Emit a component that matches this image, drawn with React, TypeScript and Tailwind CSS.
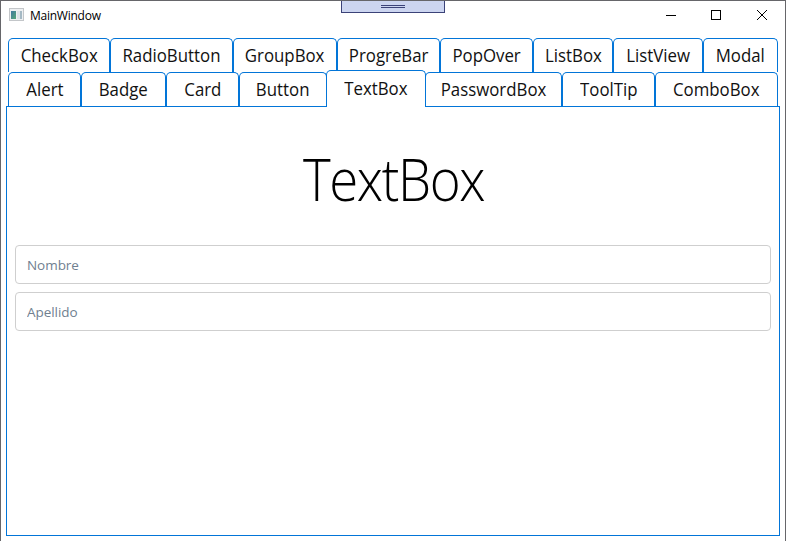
type Tab = { label: string; box: string; selected?: boolean };

const firstRow: Tab[] = [
  { label: "CheckBox", box: "w-[102px]" },
  { label: "RadioButton", box: "w-[123px]" },
  { label: "GroupBox", box: "w-[104px]" },
  { label: "ProgreBar", box: "w-[103px]" },
  { label: "PopOver", box: "w-[93px]" },
  { label: "ListBox", box: "w-[80px]" },
  { label: "ListView", box: "w-[90px]" },
  { label: "Modal", box: "w-[75px]" },
];

const secondRow: Tab[] = [
  { label: "Alert", box: "w-[73px]" },
  { label: "Badge", box: "w-[85px]" },
  { label: "Card", box: "w-[73px]" },
  { label: "Button", box: "w-[88px]" },
  { label: "TextBox", box: "w-[100px]", selected: true },
  { label: "PasswordBox", box: "w-[137px]" },
  { label: "ToolTip", box: "w-[93px]" },
  { label: "ComboBox", box: "w-[123px]" },
];

function TabRow({ tabs }: { tabs: Tab[] }) {
  return (
    <div className="flex h-[34px] items-end pl-[7px]">
      {tabs.map((t) => (
        <button
          key={t.label}
          className={`${t.box} flex shrink-0 justify-center rounded-t-[5px] border border-b-0 border-[#0275d8] bg-white text-[18px] leading-[33px] whitespace-nowrap text-[#111] ${
            t.selected ? "z-10 -mr-px -mb-px -ml-px h-[37px] pt-px" : "h-[34px]"
          }`}
        >
          <span className="inline-block scale-x-[0.935]">{t.label}</span>
        </button>
      ))}
    </div>
  );
}

function Field({ placeholder }: { placeholder: string }) {
  return (
    <input
      placeholder={placeholder}
      className="h-[39px] w-full rounded-[4px] border border-[#cfcfcf] px-[11px] text-[13.5px] tracking-[-0.05px] text-black outline-none placeholder:text-[#708090]"
    />
  );
}

export default function App() {
  return (
    <div className="relative flex h-[541px] w-[786px] flex-col overflow-hidden border border-b-0 border-[#66666a] bg-white font-['Open_Sans','Noto_Sans',sans-serif]">
      <div className="absolute -top-px left-[340px] flex h-[13px] w-[104px] flex-col items-center gap-px border border-[#3b4278] bg-[#ccd5f0] pt-1">
        <div className="h-px w-6 bg-[#3b4278]" />
        <div className="h-px w-6 bg-[#3b4278]" />
      </div>
      <header className="flex h-[37px] shrink-0 items-start">
        <svg className="mt-[7px] ml-2" width="16" height="14" viewBox="0 0 16 14" shapeRendering="crispEdges">
          <defs>
            <linearGradient id="pane" x1="0" y1="0" x2="1" y2="1">
              <stop offset="0" stopColor="#4179a0" />
              <stop offset="1" stopColor="#56a878" />
            </linearGradient>
          </defs>
          <path fill="#c3c6c9" d="M0 0h15v13H0z" />
          <path fill="#eef0f2" d="M1 1h13v11H1z" />
          <path fill="url(#pane)" d="M2 3h5v8H2z" />
          <path fill="#dde3e8" d="M8 3h3v8H8z" />
          <path fill="#a5b9c4" d="M11 3h2v8h-2z" />
        </svg>
        <span className="mt-[7px] ml-[5px] text-[12px] leading-4 tracking-[-0.25px] text-black">MainWindow</span>
        <svg className="mt-2 mr-[17px] ml-auto" width="102" height="12" viewBox="0 0 102 12" fill="none" stroke="black">
          <path d="M0 6.5h10M45.5 1.5h9v9h-9z" shapeRendering="crispEdges" />
          <path d="M91 1l10 10M101 1L91 11" />
        </svg>
      </header>
      <nav className="shrink-0">
        <TabRow tabs={firstRow} />
        <TabRow tabs={secondRow} />
      </nav>
      <main className="ml-[5px] h-[430px] w-[774px] shrink-0 border border-[#0275d8] px-2">
        <h1 className="mt-[32px] h-[106px] text-center text-[58px] leading-[80px] font-light text-black">
          <span className="inline-block scale-x-[0.91] pl-px tracking-[-1.5px]">TextBox</span>
        </h1>
        <div className="flex flex-col gap-2">
          <Field placeholder="Nombre" />
          <Field placeholder="Apellido" />
        </div>
      </main>
    </div>
  );
}
